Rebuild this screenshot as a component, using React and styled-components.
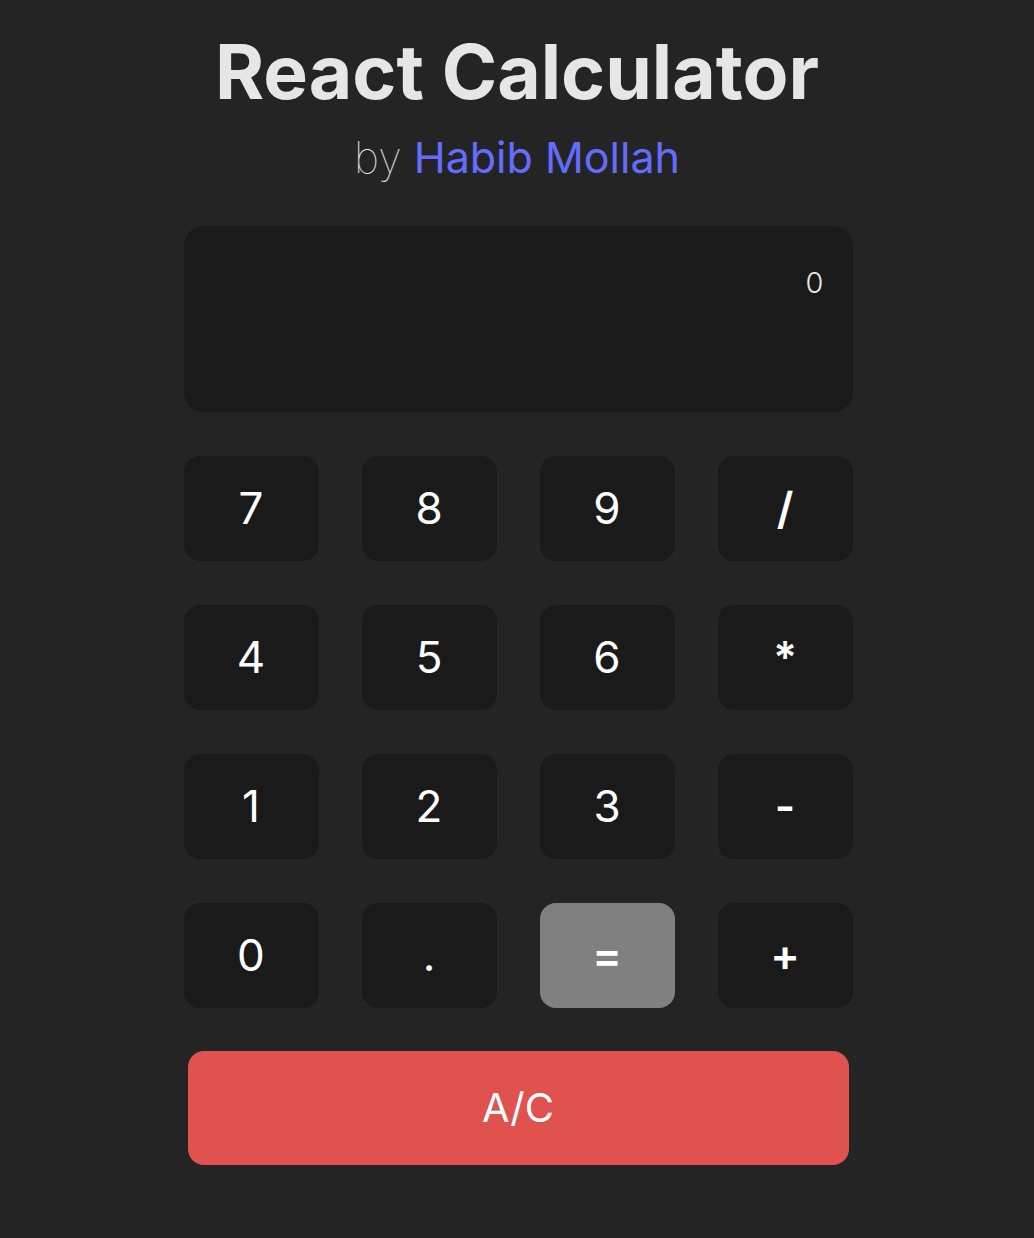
import styled, { createGlobalStyle } from "styled-components";

const GlobalStyle = createGlobalStyle`
  body {
    margin: 0;
    background: #242424;
    font-family: Inter, "Noto Sans", sans-serif;
  }
`;

const Page = styled.div`
  min-height: 100vh;
  display: flex;
  flex-direction: column;
  align-items: center;
  padding-top: 27px;
  box-sizing: border-box;
`;

const Title = styled.h1`
  margin: 0;
  font-size: 75px;
  font-weight: 700;
  line-height: 1.2;
  color: #e6e6e6;
`;

const Byline = styled.p`
  margin: 15px 0 0;
  font-size: 43px;
  line-height: 1.2;
  color: #e6e6e6;
  font-weight: 100;
`;

const Author = styled.span`
  color: #646cff;
  font-weight: 400;
`;

const Calculator = styled.div`
  width: 669px;
  margin: 42px 0 0 2px;
  display: flex;
  flex-direction: column;
`;

const Display = styled.div`
  height: 186px;
  background: #1a1a1a;
  border-radius: 20px;
  padding: 42px 29px;
  box-sizing: border-box;
  text-align: right;
  color: #e6e6e6;
  font-size: 29px;
  font-weight: 300;
  line-height: 1;
`;

const Keypad = styled.div`
  margin-top: 44px;
  display: grid;
  grid-template-columns: repeat(4, 135px);
  justify-content: space-between;
  row-gap: 44px;
`;

const Key = styled.button`
  height: 105px;
  border: none;
  border-radius: 16px;
  background: ${(p) => (p.$accent ? "#808080" : "#1a1a1a")};
  color: #ffffff;
  font-family: Inter, "Noto Sans", sans-serif;
  font-size: 44px;
  font-weight: ${(p) => (p.$op ? 600 : 400)};
  padding: 0;
  cursor: pointer;
`;

const Clear = styled.button`
  margin: 43px 4px 0;
  height: 114px;
  border: none;
  border-radius: 16px;
  background: #df524e;
  color: #ffffff;
  font-family: Inter, "Noto Sans", sans-serif;
  font-size: 40px;
  cursor: pointer;
`;

const keys = [
  ["7"], ["8"], ["9"], ["/", "op"],
  ["4"], ["5"], ["6"], ["*", "op"],
  ["1"], ["2"], ["3"], ["-", "op"],
  ["0"], ["."], ["=", "accent"], ["+", "op"],
];

export default function App() {
  return (
    <>
      <GlobalStyle />
      <Page>
        <Title>React Calculator</Title>
        <Byline>
          by <Author>Habib Mollah</Author>
        </Byline>
        <Calculator>
          <Display>0</Display>
          <Keypad>
            {keys.map(([label, kind]) => (
              <Key
                key={label}
                $op={kind === "op" || kind === "accent"}
                $accent={kind === "accent"}
              >
                {label}
              </Key>
            ))}
          </Keypad>
          <Clear>A/C</Clear>
        </Calculator>
      </Page>
    </>
  );
}
